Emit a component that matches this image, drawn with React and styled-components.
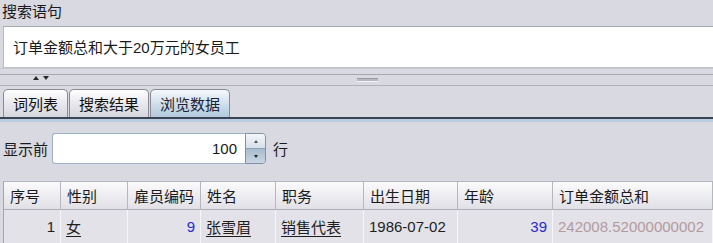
import React from 'react';
import styled, { createGlobalStyle } from 'styled-components';

const Global = createGlobalStyle`
    html, body {
        margin: 0;
        padding: 0;
        background: #d9d9e1;
        overflow: hidden;
    }
    body {
        font-family: "Liberation Sans", "Noto Sans CJK SC", sans-serif;
        font-size: 15px;
        color: #1a1a1a;
    }
`;

const Page = styled.div`
    width: 713px;
    height: 243px;
    display: flex;
    flex-direction: column;
    overflow: hidden;
`;

const Label = styled.div`
    height: 27px;
    line-height: 23px;
    padding-left: 2px;
`;

const QueryBox = styled.div`
    margin-left: 3px;
    height: 41px;
    background: #fff;
    border-top: 1px solid #a9a9b1;
    border-left: 1px solid #b8b8c0;
    border-bottom: 1px solid #c0c0c8;
    display: flex;
    align-items: center;
    padding-left: 9px;
    font-size: 15px;
`;

const Splitter = styled.div`
    height: 18px;
    border-top: 1px solid #c8c8d0;
    display: flex;
    flex-direction: column;
`;

const SplitTop = styled.div`
    height: 5px;
    border-bottom: 1px solid #a8a8b0;
`;

const SplitBar = styled.div`
    flex: 1;
    border-bottom: 1px solid #b0b0b8;
    display: flex;
    align-items: center;
    position: relative;
`;

const Arrows = styled.div`
    display: flex;
    gap: 4px;
    margin-left: 33px;
    margin-top: -3px;
`;

const Arrow = styled.span`
    width: 0;
    height: 0;
    border-left: 3px solid transparent;
    border-right: 3px solid transparent;
    ${({ up }) => up
        ? 'border-bottom: 4px solid #2a2a2a;'
        : 'border-top: 4px solid #2a2a2a;'}
`;

const Grip = styled.span`
    position: absolute;
    left: 357px;
    top: 3px;
    width: 21px;
    height: 2px;
    border-top: 1px solid #9a9aa2;
    border-bottom: 1px solid #f4f4f8;
    background: #b8b8c0;
`;

const TabStrip = styled.div`
    height: 32px;
    display: flex;
    align-items: flex-end;
    padding-left: 3px;
    border-bottom: 2px solid #3c4454;
`;

const Tab = styled.div`
    height: 27px;
    padding: 0 9px;
    display: flex;
    align-items: center;
    justify-content: center;
    border: 1px solid #8a8a94;
    border-bottom: none;
    border-radius: 5px 5px 0 0;
    margin-right: 1px;
    background: ${({ active }) => active
        ? 'linear-gradient(#f4f8fc, #c4d6e6 70%, #b2c8dc)'
        : 'linear-gradient(#ffffff, #e4e4ea 60%, #d6d6de)'};
    color: ${({ active }) => active ? '#223' : '#111'};
`;

const Band = styled.div`
    height: 3px;
    background: #b8cde2;
`;

const Panel = styled.div`
    flex: 1;
    display: flex;
    flex-direction: column;
    padding: 11px 0 0 3px;
`;

const SpinRow = styled.div`
    display: flex;
    align-items: center;
    height: 31px;
`;

const SpinLabel = styled.span`
    width: 49px;
`;

const SpinField = styled.div`
    width: 184px;
    height: 29px;
    background: #fff;
    border: 1px solid #9cb0c8;
    border-right: none;
    border-radius: 3px 0 0 3px;
    display: flex;
    align-items: center;
    justify-content: flex-end;
    padding-right: 8px;
`;

const SpinButtons = styled.div`
    width: 19px;
    height: 29px;
    border: 1px solid #7f90a8;
    border-radius: 0 4px 4px 0;
    display: flex;
    flex-direction: column;
    overflow: hidden;
`;

const SpinBtn = styled.div`
    flex: 1;
    display: flex;
    align-items: center;
    justify-content: center;
    background: ${({ down }) => down
        ? 'linear-gradient(#a8bccf, #c8d6e2)'
        : 'linear-gradient(#f4f6f9, #d6e0ea)'};
    border-top: ${({ down }) => down ? '1px solid #8da0b6' : 'none'};
`;

const Tiny = styled.span`
    width: 0;
    height: 0;
    border-left: 2px solid transparent;
    border-right: 2px solid transparent;
    ${({ up }) => up
        ? 'border-bottom: 3px solid #555;'
        : 'border-top: 3px solid #222;'}
`;

const SpinUnit = styled.span`
    margin-left: 7px;
`;

const Table = styled.div`
    margin-top: 17px;
    display: grid;
    grid-template-columns: 57px 67px 73px 75px 88px 94px 95px 160px;
    border-left: 1px solid #a4a4ac;
    border-top: 1px solid #b4b4bc;
`;

const Head = styled.div`
    height: 27px;
    display: flex;
    align-items: center;
    padding-left: 6px;
    background: linear-gradient(#fbfbfc, #ececf0 55%, #e0e0e6);
    border-right: 1px solid #b6b6be;
    border-bottom: 1px solid #aeaeb6;
`;

const Cell = styled.div`
    height: 33px;
    display: flex;
    align-items: center;
    justify-content: ${({ right }) => right ? 'flex-end' : 'flex-start'};
    padding: 0 5px;
    background: #e2e2e8;
    border-right: 1px solid #f6f6f8;
    color: ${({ color }) => color || '#1e1e1e'};
    text-decoration: ${({ link }) => link ? 'underline' : 'none'};
    text-underline-offset: 3px;
    white-space: nowrap;
    overflow: hidden;
`;

const columns = ['序号', '性别', '雇员编码', '姓名', '职务', '出生日期', '年龄', '订单金额总和'];

const row = [
    { v: '1', right: true },
    { v: '女', link: true },
    { v: '9', right: true, color: '#2a2ad0' },
    { v: '张雪眉', link: true },
    { v: '销售代表', link: true },
    { v: '1986-07-02' },
    { v: '39', right: true, color: '#2a2ad0' },
    { v: '242008.52000000002', color: '#b49a9e' },
];

export default function App() {
    return (
        <Page>
            <Global />
            <Label>搜索语句</Label>
            <QueryBox>订单金额总和大于20万元的女员工</QueryBox>
            <Splitter>
                <SplitTop />
                <SplitBar>
                    <Arrows>
                        <Arrow up />
                        <Arrow />
                    </Arrows>
                    <Grip />
                </SplitBar>
            </Splitter>
            <TabStrip>
                <Tab>词列表</Tab>
                <Tab>搜索结果</Tab>
                <Tab active>浏览数据</Tab>
            </TabStrip>
            <Band />
            <Panel>
                <SpinRow>
                    <SpinLabel>显示前</SpinLabel>
                    <SpinField>100</SpinField>
                    <SpinButtons>
                        <SpinBtn><Tiny up /></SpinBtn>
                        <SpinBtn down><Tiny /></SpinBtn>
                    </SpinButtons>
                    <SpinUnit>行</SpinUnit>
                </SpinRow>
                <Table>
                    {columns.map(c => <Head key={c}>{c}</Head>)}
                    {row.map((c, i) => (
                        <Cell key={i} right={c.right} link={c.link} color={c.color}>{c.v}</Cell>
                    ))}
                </Table>
            </Panel>
        </Page>
    );
}
